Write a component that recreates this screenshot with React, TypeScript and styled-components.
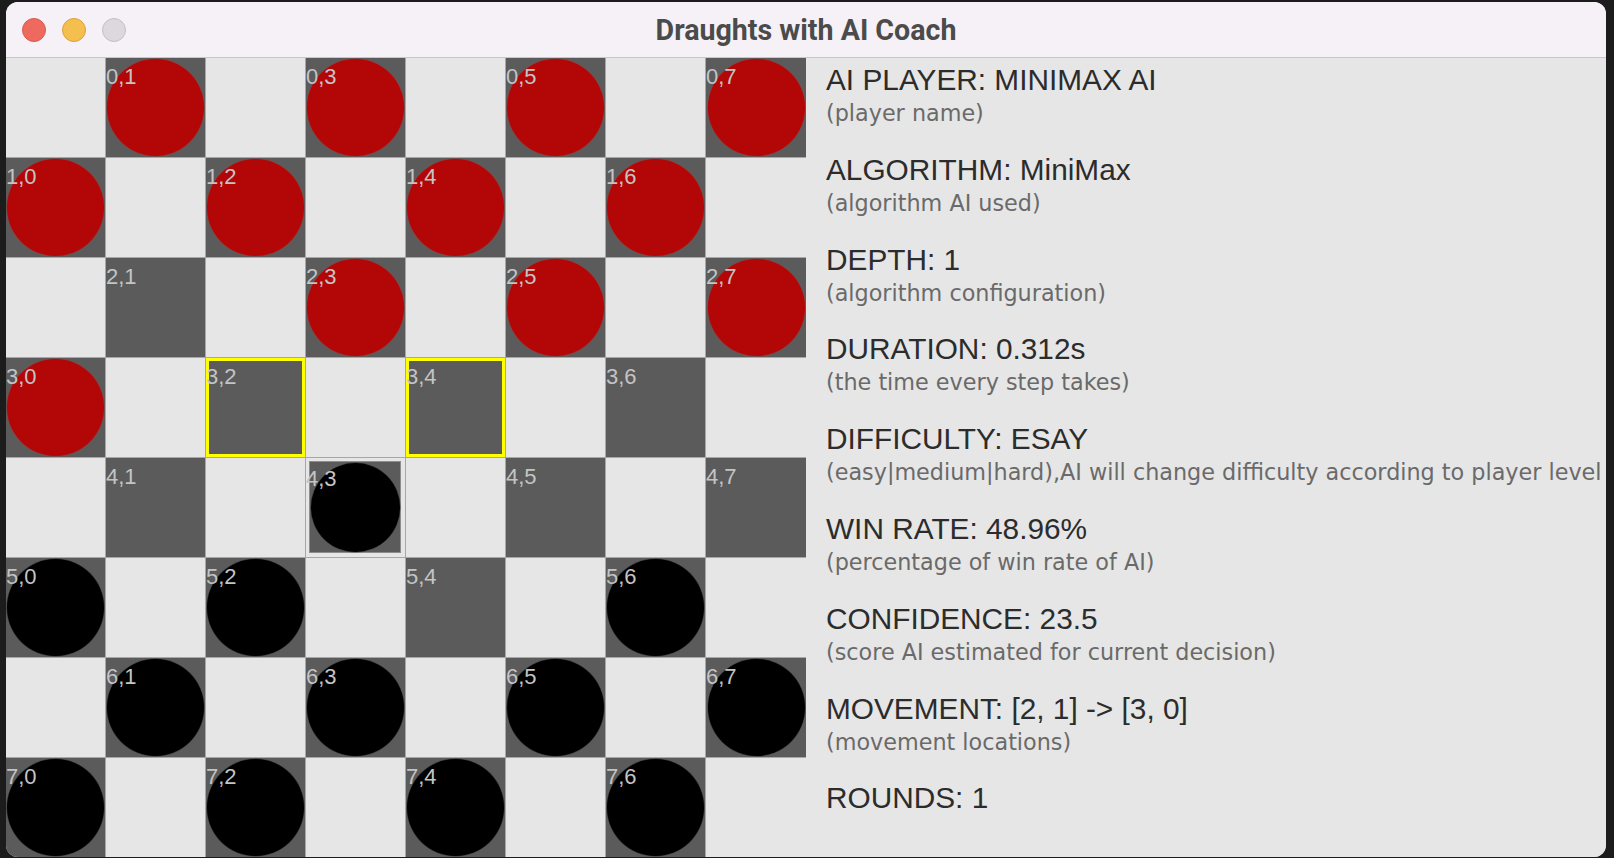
import React from "react";
import styled, { createGlobalStyle } from "styled-components";

const GlobalStyle = createGlobalStyle`
  html, body { margin: 0; padding: 0; background: #1c1c1c; }
  * { box-sizing: border-box; }
`;

const Page = styled.div`
  width: 1614px;
  height: 858px;
  background: #1c1c1c;
  padding: 2px 8px 1px 6px;
  display: flex;
  overflow: hidden;
`;

const Window = styled.div`
  flex: 1;
  border-radius: 12px;
  overflow: hidden;
  display: flex;
  flex-direction: column;
  background: #e6e6e6;
`;

const TitleBar = styled.div`
  height: 56px;
  flex: none;
  background: #f5f1f7;
  border-bottom: 1px solid #c9c5ca;
  display: grid;
  grid-template-columns: 1fr auto 1fr;
  align-items: center;
`;

const Lights = styled.div`
  display: flex;
  gap: 16px;
  padding-left: 16px;
  padding-top: 1px;
`;

const Light = styled.span<{ $fill: string; $edge: string }>`
  width: 24px;
  height: 24px;
  border-radius: 50%;
  background: ${(p) => p.$fill};
  border: 1px solid ${(p) => p.$edge};
`;

const Title = styled.div`
  font: 700 28.6px "Roboto", "Liberation Sans", sans-serif;
  color: #4b4b4b;
`;

const Body = styled.div`
  flex: 1;
  min-height: 0;
  display: flex;
`;

const Board = styled.div`
  flex: none;
  width: 800px;
  display: grid;
  grid-template-columns: repeat(8, 100px);
  grid-auto-rows: 100px;
`;

const Cell = styled.div<{ $dark: boolean; $hl?: boolean; $sel?: boolean; $last?: boolean }>`
  position: relative;
  border-right: ${(p) => (p.$last ? "0" : "1px solid #a7a7a7")};
  border-bottom: 1px solid #a7a7a7;
  background: ${(p) => (p.$dark && !p.$sel ? "#5b5b5b" : "#e6e6e6")};
  display: flex;
  align-items: center;
  justify-content: center;
  padding: ${(p) => (p.$sel ? "3px 4px 4px 3px" : "0")};
  box-shadow: ${(p) => (p.$hl ? "inset 0 0 0 3px #ffff00" : "none")};
`;

const SelBox = styled.div`
  width: 100%;
  height: 100%;
  background: #5b5b5b;
  border: 1px solid #8d8d8d;
  display: flex;
  align-items: center;
  justify-content: center;
`;

const Piece = styled.div<{ $red: boolean; $size: number }>`
  width: ${(p) => p.$size}px;
  height: ${(p) => p.$size}px;
  border-radius: 50%;
  background: ${(p) => (p.$red ? "#b30606" : "#000000")};
  box-shadow: 0 0 0.5px 0.5px ${(p) => (p.$red ? "rgba(190,40,40,0.6)" : "rgba(40,40,40,0.6)")};
`;

const Label = styled.span<{ $low?: boolean }>`
  position: absolute;
  left: 0;
  top: ${(p) => (p.$low ? "8px" : "6px")};
  font: 400 22px "Liberation Sans", Arial, sans-serif;
  color: #c4c4c4;
  pointer-events: none;
`;

const Panel = styled.div`
  flex: 1;
  min-width: 0;
  padding: 6px 0 0 20px;
  display: flex;
  flex-direction: column;
  gap: 27.8px;
  white-space: nowrap;
  overflow: hidden;
  background: #e6e6e6;
`;

const Item = styled.div`
  display: flex;
  flex-direction: column;
`;

const Heading = styled.div`
  font: 400 29.8px "Liberation Sans", Arial, sans-serif;
  line-height: 32px;
  color: #2c2c2c;
`;

const Sub = styled.div`
  margin-top: 4px;
  font: 400 22.3px "DejaVu Sans", sans-serif;
  line-height: 26px;
  color: #6a6a6a;
`;

const layout: string[] = [
  ".r.r.r.r",
  "r.r.r.r.",
  "...r.r.r",
  "r.......",
  "...B....",
  "b.b...b.",
  ".b.b.b.b",
  "b.b.b.b.",
];

const highlights = new Set(["3,2", "3,4"]);

const info: { h: string; s?: string }[] = [
  { h: "AI PLAYER: MINIMAX AI", s: "(player name)" },
  { h: "ALGORITHM: MiniMax", s: "(algorithm AI used)" },
  { h: "DEPTH: 1", s: "(algorithm configuration)" },
  { h: "DURATION: 0.312s", s: "(the time every step takes)" },
  {
    h: "DIFFICULTY: ESAY",
    s: "(easy|medium|hard),AI will change difficulty according to player level",
  },
  { h: "WIN RATE: 48.96%", s: "(percentage of win rate of AI)" },
  { h: "CONFIDENCE: 23.5", s: "(score AI estimated for current decision)" },
  { h: "MOVEMENT: [2, 1] -> [3, 0]", s: "(movement locations)" },
  { h: "ROUNDS: 1" },
];

function BoardCell({ r, c }: { r: number; c: number }) {
  const dark = (r + c) % 2 === 1;
  const ch = layout[r][c];
  const sel = ch === "B";
  const isPiece = ch !== ".";
  const key = `${r},${c}`;
  return (
    <Cell $dark={dark} $hl={highlights.has(key)} $sel={sel} $last={c === 7}>
      {sel ? (
        <SelBox>
          <Piece $red={false} $size={89} />
        </SelBox>
      ) : (
        isPiece && <Piece $red={ch === "r"} $size={97} />
      )}
      {dark && <Label $low={sel}>{key}</Label>}
    </Cell>
  );
}

export default function App() {
  const cells: React.ReactNode[] = [];
  for (let r = 0; r < 8; r++) {
    for (let c = 0; c < 8; c++) {
      cells.push(<BoardCell key={`${r}-${c}`} r={r} c={c} />);
    }
  }
  return (
    <>
      <GlobalStyle />
      <Page>
        <Window>
          <TitleBar>
            <Lights>
              <Light $fill="#ee6a5f" $edge="#d8594e" />
              <Light $fill="#f5bf4f" $edge="#d9a23b" />
              <Light $fill="#dcd8dd" $edge="#c3bfc4" />
            </Lights>
            <Title>Draughts with AI Coach</Title>
            <span />
          </TitleBar>
          <Body>
            <Board>{cells}</Board>
            <Panel>
              {info.map((it) => (
                <Item key={it.h}>
                  <Heading>{it.h}</Heading>
                  {it.s && <Sub>{it.s}</Sub>}
                </Item>
              ))}
            </Panel>
          </Body>
        </Window>
      </Page>
    </>
  );
}
